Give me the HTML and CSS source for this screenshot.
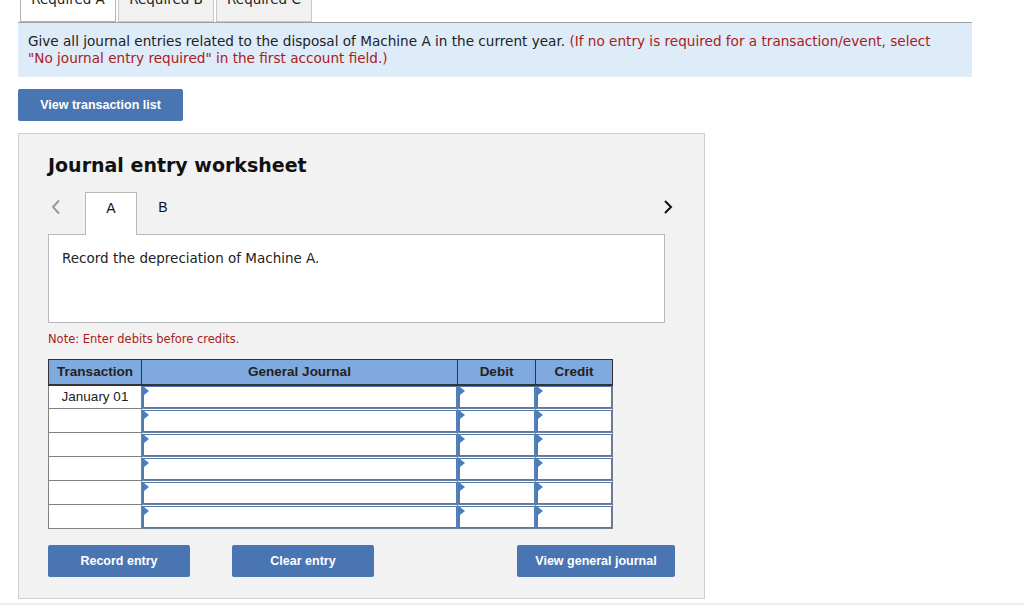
FILE: index.html
```html
<!DOCTYPE html>
<html>
<head>
<meta charset="utf-8">
<link rel="stylesheet" href="styles.css">
</head>
<body>
<div class="page">
  <div class="tabbar">
    <div class="qtab active">Required A</div>
    <div class="qtab">Required B</div>
    <div class="qtab">Required C</div>
  </div>
  <div class="info">
    Give all journal entries related to the disposal of Machine A in the current year. <span class="red">(If no entry is required for a transaction/event, select "No journal entry required" in the first account field.)</span>
  </div>
  <div class="btnrow">
    <button class="btn btn-list">View transaction list</button>
  </div>
  <div class="panel">
    <h2 class="title">Journal entry worksheet</h2>
    <div class="nav">
      <span class="arrow prev">
        <svg width="12" height="16" viewBox="0 0 12 16"><path d="M9 1.5 L3 8 L9 14.5" fill="none" stroke="#9a9a9a" stroke-width="2"/></svg>
      </span>
      <div class="etab active">A</div>
      <div class="etab">B</div>
      <span class="spacer"></span>
      <span class="arrow next">
        <svg width="12" height="16" viewBox="0 0 12 16"><path d="M3 2 L9 8 L3 14" fill="none" stroke="#111" stroke-width="2"/></svg>
      </span>
    </div>
    <div class="desc">Record the depreciation of Machine A.</div>
    <div class="note">Note: Enter debits before credits.</div>
    <table class="journal">
      <colgroup>
        <col style="width:93px"><col style="width:316px"><col style="width:78px"><col style="width:77px">
      </colgroup>
      <thead>
        <tr><th>Transaction</th><th>General Journal</th><th>Debit</th><th>Credit</th></tr>
      </thead>
      <tbody>
        <tr><td class="tx">January 01</td><td class="in"><div class="box"></div></td><td class="in"><div class="box"></div></td><td class="in"><div class="box"></div></td></tr>
        <tr><td class="tx"></td><td class="in"><div class="box"></div></td><td class="in"><div class="box"></div></td><td class="in"><div class="box"></div></td></tr>
        <tr><td class="tx"></td><td class="in"><div class="box"></div></td><td class="in"><div class="box"></div></td><td class="in"><div class="box"></div></td></tr>
        <tr><td class="tx"></td><td class="in"><div class="box"></div></td><td class="in"><div class="box"></div></td><td class="in"><div class="box"></div></td></tr>
        <tr><td class="tx"></td><td class="in"><div class="box"></div></td><td class="in"><div class="box"></div></td><td class="in"><div class="box"></div></td></tr>
        <tr><td class="tx"></td><td class="in"><div class="box"></div></td><td class="in"><div class="box"></div></td><td class="in"><div class="box"></div></td></tr>
      </tbody>
    </table>
    <div class="actions">
      <button class="btn btn-record">Record entry</button>
      <button class="btn btn-clear">Clear entry</button>
      <span class="spacer"></span>
      <button class="btn btn-view">View general journal</button>
    </div>
  </div>
  <div class="bottomline"></div>
</div>
</body>
</html>
```
FILE: styles.css
```css
* { box-sizing: border-box; }
html, body { margin: 0; padding: 0; background: #fff; overflow: hidden; }
body { font-family: "DejaVu Sans", Verdana, sans-serif; color: #222; }

.page { padding-left: 18px; width: 1024px; }

.tabbar {
  display: flex;
  width: 954px;
  height: 33px;
  margin-top: -10px;
  border-bottom: 1px solid #a0a0a0;
  padding-left: 2px;
  gap: 2px;
}
.qtab {
  width: 96px;
  height: 32px;
  font-size: 13.5px;
  line-height: 16px;
  text-align: center;
  border: 1px solid #c8c8c8;
  background: #f1f1f1;
  color: #222;
}
.qtab.active { background: #fff; border-color: #b5b5b5; }

.info {
  width: 954px;
  background: #deebf8;
  padding: 10px 30px 10px 10px;
  font-size: 13.6px;
  line-height: 17px;
  color: #222;
}
.red { color: #a8201a; }

.btnrow { padding: 12px 0 12px; display: flex; }

.btn {
  border: none;
  background: #4a75b3;
  color: #fff;
  font-family: "Liberation Sans", Arial, sans-serif;
  font-weight: bold;
  font-size: 12.5px;
  height: 32px;
  border-radius: 2px;
  padding: 0;
  cursor: pointer;
}
.btn-list { width: 165px; }
.btn-record, .btn-clear { width: 142px; }
.btn-view { width: 158px; }

.panel {
  width: 687px;
  height: 466px;
  background: #f2f2f2;
  border: 1px solid #cfcfcf;
  padding: 17px 0 0 29px;
}
.title {
  margin: 0;
  font-size: 19px;
  line-height: 28px;
  font-weight: bold;
  color: #111;
}
.nav {
  display: flex;
  align-items: flex-end;
  width: 630px;
  height: 42px;
  margin-top: 13px;
}
.arrow { display: flex; align-items: center; height: 30px; align-self: flex-start; }
.arrow.prev { width: 37px; padding-left: 2px; }
.arrow.next { width: 12px; margin-right: 4px; }
.spacer { flex: 1; }
.etab {
  width: 52px;
  height: 42px;
  font-family: "Liberation Sans", Arial, sans-serif;
  font-size: 14px;
  line-height: 30px;
  text-align: center;
  color: #111;
}
.etab.active {
  background: #fff;
  border: 1px solid #b8b8b8;
  border-bottom: none;
  position: relative;
  z-index: 1;
  margin-bottom: -1px;
  height: 43px;
}
.desc {
  width: 617px;
  height: 89px;
  background: #fff;
  border: 1px solid #b8b8b8;
  padding: 15px 13px;
  font-size: 13.5px;
  line-height: 17px;
  color: #222;
}
.note {
  margin-top: 8px;
  font-size: 11.5px;
  line-height: 16px;
  color: #a8201a;
}
.journal {
  margin-top: 12px;
  border-collapse: collapse;
  table-layout: fixed;
  width: 565px;
  font-family: "Liberation Sans", Arial, sans-serif;
  font-size: 13.5px;
}
.journal th {
  height: 25px;
  background: #80aadf;
  border: 1px solid #333;
  border-bottom: 2px solid #333;
  font-weight: bold;
  color: #222;
  padding: 0;
}
.journal td {
  height: 24px;
  background: #fff;
  border: 1px solid #808080;
  padding: 0;
}
.journal td.tx { text-align: center; color: #222; border-top-color: #9a9a9a; }
.journal td.in { padding: 0; border-color: #6f7f95; }
.box {
  height: 22px;
  border: 1px solid #4f7bb5;
  border-left: 2px solid #4f7bb5;
  position: relative;
}
.box::before {
  content: "";
  position: absolute;
  left: 0;
  top: 0;
  border-left: 5px solid #4a7fc2;
  border-top: 4px solid transparent;
  border-bottom: 4px solid transparent;
}
.actions {
  display: flex;
  width: 627px;
  margin-top: 16px;
  gap: 42px;
}
.actions .spacer { margin-left: -42px; }

.bottomline {
  margin-left: -18px;
  margin-top: 4px;
  width: 1024px;
  height: 2px;
  background: #ececec;
}
```
